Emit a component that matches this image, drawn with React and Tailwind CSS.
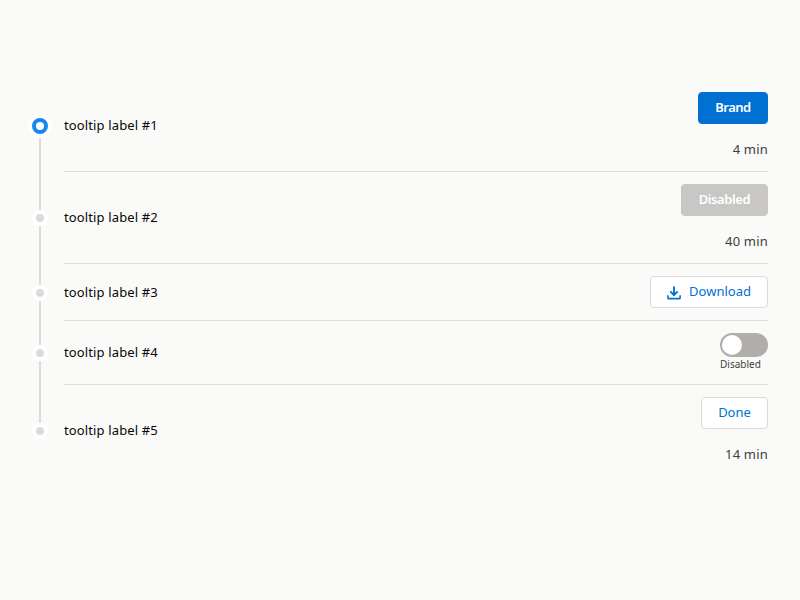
import React from "react";

function Button({ className, children }) {
  return (
    <button
      type="button"
      className={`flex h-8 items-center justify-center rounded-[4px] border pb-[2px] text-[13px] leading-[30px] whitespace-nowrap ${className}`}
    >
      {children}
    </button>
  );
}

function Duration({ children }) {
  return <p className="mt-[15px] text-[13px] leading-[20px] tracking-[0.2px] text-[#3e3e3c]">{children}</p>;
}

function DownloadIcon() {
  return (
    <svg className="mt-[3px] mr-2 size-[14px]" viewBox="0 0 14 14" fill="none" stroke="currentColor">
      <path d="M7 1.3V8.8" strokeWidth="1.9" strokeLinecap="round" />
      <path d="M3.8 5.9L7 9L10.2 5.9" strokeWidth="1.9" strokeLinecap="round" strokeLinejoin="round" />
      <path d="M0.9 9.9V12Q0.9 12.6 1.5 12.6H12.5Q13.1 12.6 13.1 12V9.9" strokeWidth="1.6" strokeLinecap="round" />
    </svg>
  );
}

function Toggle() {
  return (
    <div className="flex w-12 flex-col">
      <div className="flex h-6 w-12 items-center rounded-full bg-[#b0adab] px-[2px]">
        <div className="size-5 rounded-full bg-white" />
      </div>
      <span className="text-[10px] leading-[15px] text-[#3e3e3c]">Disabled</span>
    </div>
  );
}

function Marker({ active, first, last }) {
  return (
    <div className="flex w-6 shrink-0 flex-col items-center">
      <div className={`w-[2px] flex-1 ${first ? "" : "bg-[#dddbda]"}`} />
      {active ? (
        <div className="flex size-6 items-center justify-center rounded-full bg-white">
          <div className="size-4 rounded-full border-4 border-[#1589ee] bg-white" />
        </div>
      ) : (
        <div className="flex size-4 items-center justify-center rounded-full bg-white">
          <div className="size-2 rounded-full bg-[#dddbda]" />
        </div>
      )}
      <div className={`w-[2px] flex-1 ${last ? "" : "bg-[#dddbda]"}`} />
    </div>
  );
}

function Step({ label, height, active, first, last, children }) {
  return (
    <li className={`flex ${height}`}>
      <Marker active={active} first={first} last={last} />
      <div
        className={`ml-3 flex flex-1 items-center justify-between border-b pb-px ${last ? "border-transparent" : "border-[#dddbda]"}`}
      >
        <span className="text-[13px] leading-[20px] tracking-[0.13px] text-[#080707]">{label}</span>
        <div className="flex flex-col items-end self-start pt-3">{children}</div>
      </div>
    </li>
  );
}

export default function App() {
  return (
    <main className="h-[600px] w-[800px] bg-[#fafaf9] pt-20 pr-8 pl-7 font-['Noto_Sans',sans-serif]">
      <ol>
        <Step label="tooltip label #1" height="h-[92px]" active first>
          <Button className="w-[70px] border-[#0070d2] bg-[#0070d2] font-semibold tracking-[-0.5px] text-white">
            Brand
          </Button>
          <Duration>4 min</Duration>
        </Step>
        <Step label="tooltip label #2" height="h-[92px]">
          <Button className="w-[87px] border-[#c9c7c5] bg-[#c9c7c5] font-semibold tracking-[-0.4px] text-white">
            Disabled
          </Button>
          <Duration>40 min</Duration>
        </Step>
        <Step label="tooltip label #3" height="h-[57px]">
          <Button className="w-[118px] border-[#dddbda] bg-white text-[#0070d2]">
            <DownloadIcon />
            Download
          </Button>
        </Step>
        <Step label="tooltip label #4" height="h-[64px]">
          <Toggle />
        </Step>
        <Step label="tooltip label #5" height="h-[92px]" last>
          <Button className="w-[67px] border-[#dddbda] bg-white text-[#0070d2]">Done</Button>
          <Duration>14 min</Duration>
        </Step>
      </ol>
    </main>
  );
}
